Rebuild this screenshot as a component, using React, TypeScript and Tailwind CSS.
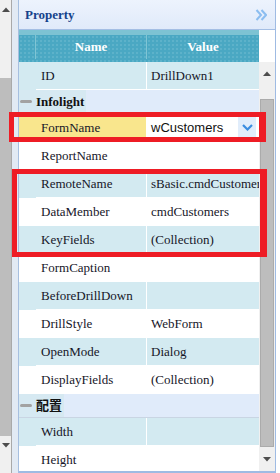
import React from "react";

const serif = "font-['Liberation_Serif','Noto_Sans_CJK_SC',serif]";

type Row = { name: string; value: string; bg: string };

const infolightRows: Row[] = [
  { name: "ReportName", value: "", bg: "bg-white" },
  { name: "RemoteName", value: "sBasic.cmdCustomers", bg: "bg-[#d3eaf1]" },
  { name: "DataMember", value: "cmdCustomers", bg: "bg-white" },
  { name: "KeyFields", value: "(Collection)", bg: "bg-[#d3eaf1]" },
  { name: "FormCaption", value: "", bg: "bg-white" },
  { name: "BeforeDrillDown", value: "", bg: "bg-[#d3eaf1]" },
  { name: "DrillStyle", value: "WebForm", bg: "bg-white" },
  { name: "OpenMode", value: "Dialog", bg: "bg-[#d3eaf1]" },
  { name: "DisplayFields", value: "(Collection)", bg: "bg-white" },
];

const layoutRows: Row[] = [
  { name: "Width", value: "", bg: "bg-[#d3eaf1]" },
  { name: "Height", value: "", bg: "bg-white" },
];

function TriUp() {
  return (
    <svg width="8" height="5" viewBox="0 0 8 5">
      <polygon points="0,5 4,0.5 8,5" fill="#4d4d4d" />
    </svg>
  );
}

function TriDown() {
  return (
    <svg width="8" height="5" viewBox="0 0 8 5">
      <polygon points="0,0 4,4.5 8,0" fill="#4d4d4d" />
    </svg>
  );
}

function PropRow({ name, value, bg }: Row) {
  return (
    <div className={`flex h-[28px] shrink-0 ${bg}`}>
      <div className="w-[17px] shrink-0" />
      <div className="flex w-[111px] shrink-0 items-center border-b border-r border-white pl-[5px]">
        {name}
      </div>
      <div className="flex min-w-0 flex-1 items-center overflow-hidden whitespace-nowrap border-b border-white pl-[4px]">
        {value}
      </div>
    </div>
  );
}

function GroupRow({ label }: { label: string }) {
  return (
    <div className="flex h-[24px] shrink-0 border-b border-[#c9d5e3] bg-[#e0ebfa]">
      <div className="flex items-center bg-[#d6e9f2] pl-[1px] pr-[2px]">
        <span className="mr-[4px] h-[3px] w-[12px] rounded-sm bg-[#a2a2a2]" />
        <span className="font-bold text-[#111]">{label}</span>
      </div>
    </div>
  );
}

export default function App() {
  return (
    <div className={`relative flex h-[473px] w-[280px] overflow-hidden bg-white text-[13px] text-[#161628] ${serif}`}>
      {/* outer page scrollbar */}
      <div className="flex w-[12px] shrink-0 flex-col border-r border-[#a9a9a9] bg-[#f0f0f0]">
        <div className="flex h-[18px] items-center justify-center">
          <TriUp />
        </div>
        <div className="mt-[60px] h-[358px] bg-[#bdbdbd]" />
        <div className="flex h-[18px] items-center justify-center">
          <TriDown />
        </div>
      </div>
      <div className="w-[6px] shrink-0 bg-[#e2eaf4]" />

      {/* property panel */}
      <div className="flex w-[258px] shrink-0 flex-col border-x border-b-2 border-l-[#a6bfe0] border-r-[#9fbbe3] border-b-[#9fbbe3]">
        <div className="flex h-[30px] shrink-0 items-center justify-between border-b border-[#a4bee4] bg-gradient-to-b from-[#edf3fd] to-[#e0eafa] pl-[6px] pr-[8px]">
          <span className="font-bold text-[#15428b]">Property</span>
          <svg width="12" height="12" viewBox="0 0 12 12" fill="none">
            <path d="M1.5 1 L6 6 L1.5 11 M6.5 1 L11 6 L6.5 11" stroke="#8bbdf0" strokeWidth="2" />
          </svg>
        </div>

        <div className="flex min-h-0 flex-1">
          {/* grid */}
          <div className="flex w-[240px] shrink-0 flex-col overflow-hidden">
            <div className="flex h-[32px] shrink-0 border-t-[5px] border-[#7dc3d3] bg-[#4aa8c3] bg-[radial-gradient(#5db2ca_1px,transparent_1px)] bg-[length:4px_4px] pb-[3px] font-bold text-white">
              <div className="w-[17px] shrink-0 border-r border-[#7fc5d5]" />
              <div className="flex w-[111px] shrink-0 items-center justify-center border-r border-[#7fc5d5]">
                Name
              </div>
              <div className="flex flex-1 items-center justify-center">Value</div>
            </div>

            <PropRow name="ID" value="DrillDown1" bg="bg-[#d3eaf1]" />
            <GroupRow label="Infolight" />

            <div className="flex h-[28px] shrink-0 bg-white">
              <div className="w-[17px] shrink-0 bg-[#f9e68d]" />
              <div className="flex w-[111px] shrink-0 items-center border-r border-white bg-[#f9e68d] pl-[5px]">
                FormName
              </div>
              <div className="flex flex-1 items-center justify-between pl-[4px] font-['Liberation_Sans',sans-serif] text-[13px] text-[#111]">
                <span>wCustomers</span>
                <div className="mr-[3px] mb-[1px] flex h-[21px] w-[18px] items-center justify-center bg-[#e1edfb]">
                  <svg width="11" height="7" viewBox="0 0 11 7" fill="none">
                    <path d="M1 1 L5.5 5.5 L10 1" stroke="#3b8de0" strokeWidth="2.2" />
                  </svg>
                </div>
              </div>
            </div>

            {infolightRows.map((r) => (
              <PropRow key={r.name} {...r} />
            ))}
            <GroupRow label="配置" />
            {layoutRows.map((r) => (
              <PropRow key={r.name} {...r} />
            ))}
          </div>

          {/* grid scrollbar */}
          <div className="flex w-[16px] shrink-0 flex-col">
            <div className="h-[32px] shrink-0 bg-white" />
            <div className="flex flex-1 flex-col bg-[#f0f0f0]">
              <div className="flex h-[22px] shrink-0 items-center justify-center">
                <TriUp />
              </div>
              <div className="mx-[1px] mt-[15px] h-[348px] shrink-0 border border-[#ababab] bg-[#bdbdbd]" />
              <div className="flex flex-1 items-center justify-center">
                <TriDown />
              </div>
            </div>
          </div>
        </div>
      </div>

      {/* red annotation frames */}
      <div className="absolute left-[9px] top-[112px] h-[30px] w-[257px] border-[5px] border-r-[7px] border-[#ee1c25]" />
      <div className="absolute left-[12px] top-[169px] h-[88px] w-[255px] border-[5px] border-r-[7px] border-[#ee1c25]" />
    </div>
  );
}
